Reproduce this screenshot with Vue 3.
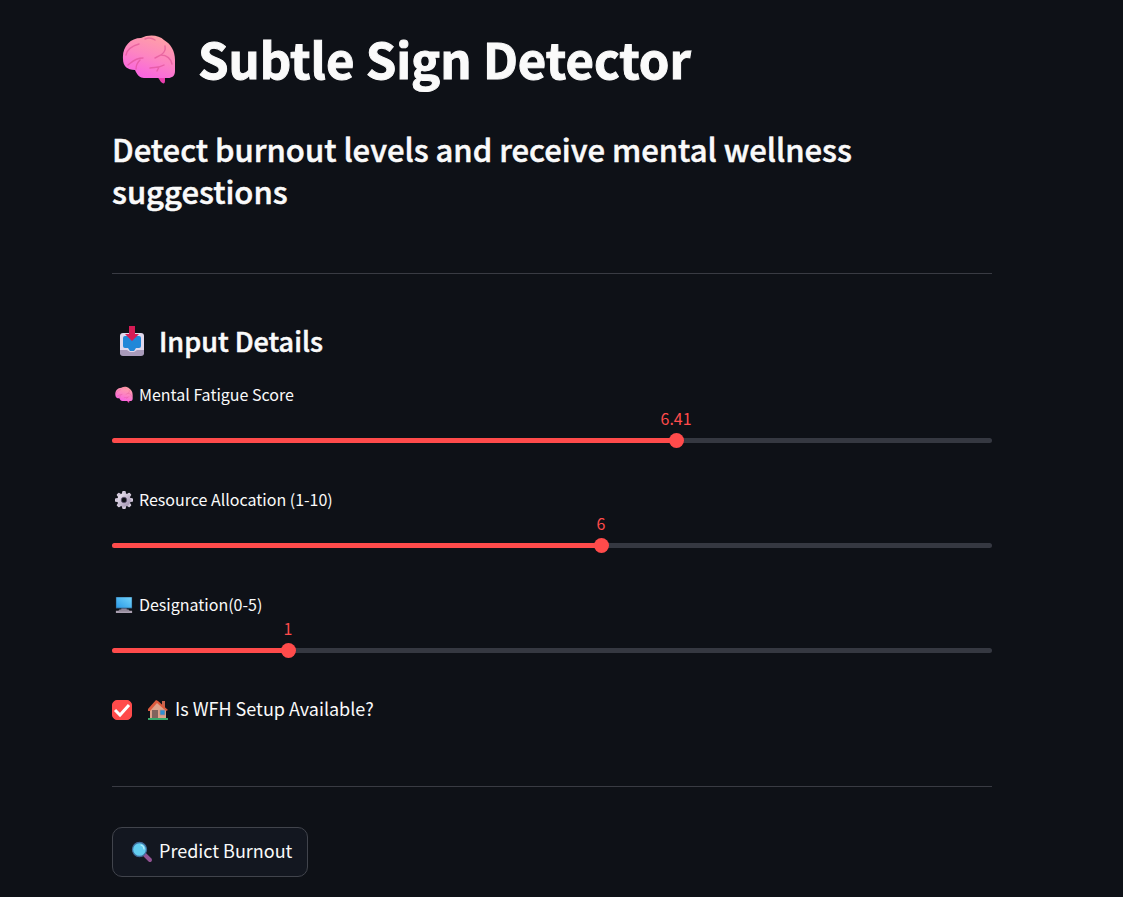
<script setup>
import { reactive, ref } from 'vue'

const sliders = reactive([
  { id: 'fatigue', icon: 'brain', label: 'Mental Fatigue Score', min: 0, max: 10, step: 0.01, value: 6.41 },
  { id: 'resource', icon: 'gear', label: 'Resource Allocation (1-10)', min: 1, max: 10, step: 1, value: 6 },
  { id: 'designation', icon: 'monitor', label: 'Designation(0-5)', min: 0, max: 5, step: 1, value: 1 },
])
const wfh = ref(true)
const percent = (s) => ((s.value - s.min) / (s.max - s.min)) * 100 + '%'
const teeth = [0, 45, 90, 135, 180, 225, 270, 315]
</script>

<template>
  <svg class="defs" aria-hidden="true">
    <defs>
      <linearGradient id="pink" x1=".75" y1="0" x2=".35" y2="1">
        <stop offset="0" stop-color="#ffa2a4" />
        <stop offset=".5" stop-color="#fd86c0" />
        <stop offset="1" stop-color="#f962e3" />
      </linearGradient>
      <linearGradient id="steel" x1="0" y1="0" x2="1" y2="1">
        <stop offset="0" stop-color="#e6dfed" />
        <stop offset="1" stop-color="#a799b5" />
      </linearGradient>
      <linearGradient id="screen" x1="0" y1="1" x2="1" y2="0">
        <stop offset="0" stop-color="#2b9be8" />
        <stop offset="1" stop-color="#72d3fb" />
      </linearGradient>
      <symbol id="brain" viewBox="0 0 54 50">
        <path d="M35 41l4 6c2 2 4 2 4-1v-7z" fill="#e93fae" />
        <path d="M1 24C0 12 8 3 19 3 27-1 37 0 42 5c7 4 11 11 11 20v11c0 5-3 7-7 7H22c-4 0-7-3-9-8C5 35 1 31 1 24z" fill="url(#pink)" />
        <g fill="none" stroke="#dc4c91" stroke-width="1.4" stroke-linecap="round" opacity=".6">
          <path d="M4 20c1-6 6-9 13-11M23 4c4-2 7-1 10 1M43 11c1 5-1 7-4 9l-6 3M39 20c6 0 10 4 11 9M6 30c4-3 7-7 15-7M14 34c0-4 1-6 4-9M28 33c5-1 9 0 14-3M37 32l-2 4" />
        </g>
      </symbol>
      <symbol id="inbox" viewBox="0 0 24 30">
        <rect y="7" width="24" height="22" rx="3" fill="#e0d8ec" />
        <path d="M0 24h7l3 2h4l3-2h7v3q0 3-3 3H3q-3 0-3-3z" fill="#a99bbb" />
        <path d="M5 10h14q2 0 2 2v8q0 2-2 2h-3l-2 3h-4l-2-3H5q-2 0-2-2v-8q0-2 2-2z" fill="#2187d8" />
        <path d="M9 0h6v8h4l-7 7-7-7h4z" fill="#d51b55" />
      </symbol>
      <symbol id="gear" viewBox="0 0 20 20">
        <g fill="url(#steel)">
          <path v-for="a in teeth" :key="a" d="M8 1q0-1 1-1h2q1 0 1 1l1 5H7z" :transform="`rotate(${a} 10 10)`" />
        </g>
        <circle cx="10" cy="10" r="5.2" fill="none" stroke="url(#steel)" stroke-width="4.4" />
        <circle cx="10" cy="10" r="3.1" fill="none" stroke="#665778" stroke-width=".8" />
      </symbol>
      <symbol id="monitor" viewBox="0 0 20 20">
        <path d="M7 13h6v3H7z" fill="#766a80" />
        <rect x="1" y="1" width="18" height="13" rx=".7" fill="#315b80" />
        <rect x="1.5" y="1.5" width="17" height="11.5" fill="url(#screen)" />
        <path d="M5 15h10l1 1.5h3V19H1v-2.5h3z" fill="#aaa0b1" />
        <path d="M4 16.5h12" stroke="#716879" stroke-width=".8" />
      </symbol>
      <symbol id="house" viewBox="0 0 22 22">
        <path d="M15 2h3v7h-3z" fill="#c9634c" />
        <path d="M3 9l6-7 10 8v10H3z" fill="#dda38b" />
        <path d="M9 1l2 1 10 9-2 1-9-8-7 8H1v-2z" fill="#dc5b3d" />
        <path d="M5 11h6v9H5z" fill="#80645d" />
        <path d="M13 11h5v5h-5z" fill="#2f8fd2" stroke="#b98d84" stroke-width=".7" />
        <path d="M1 19h20v2H1z" fill="#39a96b" />
      </symbol>
      <symbol id="lens" viewBox="0 0 22 22">
        <path d="M13 13l6 6" stroke="#925393" stroke-width="4" stroke-linecap="round" />
        <circle cx="8.5" cy="8.5" r="7" fill="#62cdf0" stroke="#416b9a" stroke-width="1.3" />
        <path d="M10 4q3 1 3 4" fill="none" stroke="#b8f0ff" stroke-width="1.2" stroke-linecap="round" />
      </symbol>
    </defs>
  </svg>

  <main class="page">
    <div class="content">
      <h1><svg class="brain-icon" aria-hidden="true"><use href="#brain" /></svg>Subtle Sign Detector</h1>
      <p class="lead">Detect burnout levels and receive mental wellness suggestions</p>
      <hr />
      <h2><svg class="inbox-icon" aria-hidden="true"><use href="#inbox" /></svg>Input Details</h2>

      <div v-for="s in sliders" :key="s.id" class="field">
        <label :for="s.id"><svg class="label-icon" aria-hidden="true"><use :href="'#' + s.icon" /></svg>{{ s.label }}</label>
        <div class="slider">
          <output :for="s.id" :style="{ left: percent(s) }">{{ s.value }}</output>
          <div class="rail"><div class="fill" :style="{ width: percent(s) }"></div></div>
          <input :id="s.id" v-model.number="s.value" type="range" :min="s.min" :max="s.max" :step="s.step" />
        </div>
      </div>

      <label class="check">
        <input v-model="wfh" type="checkbox" />
        <svg class="tick" viewBox="0 0 20 20" aria-hidden="true"><path d="M3 10l5 5 9-10" /></svg>
        <svg class="small-icon" aria-hidden="true"><use href="#house" /></svg>
        <span>Is WFH Setup Available?</span>
      </label>
      <hr />
      <button type="button"><svg class="small-icon" aria-hidden="true"><use href="#lens" /></svg><span>Predict Burnout</span></button>
    </div>
  </main>
</template>

<style>
body {
  margin: 0;
  background: #0e1117;
}
</style>

<style scoped>
.defs {
  position: absolute;
  width: 0;
  height: 0;
}
.page {
  box-sizing: border-box;
  padding: 25px 35px 20px 16px;
  background: #0e1117;
  color: #fafafa;
  font-family: "Noto Sans CJK SC", "Noto Sans", sans-serif;
}
.content {
  max-width: 880px;
  margin: 0 auto;
}
svg {
  flex: none;
}
h1, h2, .lead {
  margin: 0;
  -webkit-text-stroke: 1px #fafafa;
  paint-order: stroke fill;
}
h1 {
  display: flex;
  align-items: center;
  font-size: 49px;
  line-height: 66px;
  font-weight: 700;
}
.brain-icon {
  width: 54px;
  height: 50px;
  margin: 4px 22px 0 10px;
}
.lead {
  margin-top: 37px;
  font-size: 31px;
  line-height: 42px;
  font-weight: 500;
}
hr {
  height: 1px;
  margin: 61px 0 49px;
  border: 0;
  background: #393b43;
}
h2 {
  display: flex;
  align-items: center;
  font-size: 27px;
  line-height: 36px;
  font-weight: 500;
}
h2, .lead {
  -webkit-text-stroke-width: .5px;
}
.inbox-icon {
  width: 24px;
  height: 30px;
  margin: 0 15px 0 8px;
}
.field {
  height: 81px;
  margin-bottom: 24px;
}
h2 + .field {
  margin-top: 24px;
}
.field label {
  display: flex;
  align-items: center;
  height: 22px;
  padding-bottom: 2px;
  font-size: 16px;
  line-height: 22px;
}
.label-icon {
  width: 18px;
  height: 18px;
  margin: 2px 6px 0 3px;
}
.slider {
  position: relative;
  padding-top: 31px;
}
.slider output {
  position: absolute;
  top: 0;
  transform: translateX(-50%);
  color: #ff4b4b;
  font-size: 16px;
  line-height: 22px;
}
.rail {
  height: 5px;
  border-radius: 3px;
  background: #353841;
}
.fill {
  height: 5px;
  border-radius: 3px;
  background: #ff4b4b;
}
.slider input {
  position: absolute;
  top: 26px;
  left: -7px;
  width: calc(100% + 15px);
  height: 15px;
  margin: 0;
  appearance: none;
  background: transparent;
}
.slider input::-webkit-slider-thumb {
  width: 15px;
  height: 15px;
  border: 0;
  border-radius: 50%;
  appearance: none;
  background: #ff4b4b;
}
.check {
  position: relative;
  display: flex;
  align-items: center;
  width: max-content;
  height: 30px;
  margin-top: -3px;
  font-size: 18px;
  line-height: 26px;
}
.check span, button span {
  padding-bottom: 4px;
}
.check input {
  width: 20px;
  height: 20px;
  margin: 0 15px 0 0;
  border: 1px solid #ff4b4b;
  border-radius: 5px;
  appearance: none;
}
.check input:checked {
  background: #ff4b4b;
}
.tick {
  position: absolute;
  left: 0;
  width: 20px;
  height: 20px;
  fill: none;
  stroke: #fff;
  stroke-width: 3;
  visibility: hidden;
  pointer-events: none;
}
.check input:checked + .tick {
  visibility: visible;
}
.small-icon {
  width: 22px;
  height: 22px;
  margin-right: 6px;
}
.check + hr {
  margin: 61px 0 40px;
}
button {
  display: flex;
  align-items: center;
  height: 50px;
  padding: 0 15px 0 18px;
  border: 1px solid #41444c;
  border-radius: 10px;
  background: #131720;
  color: #fafafa;
  font-family: inherit;
  font-size: 18px;
  line-height: 26px;
}
</style>
